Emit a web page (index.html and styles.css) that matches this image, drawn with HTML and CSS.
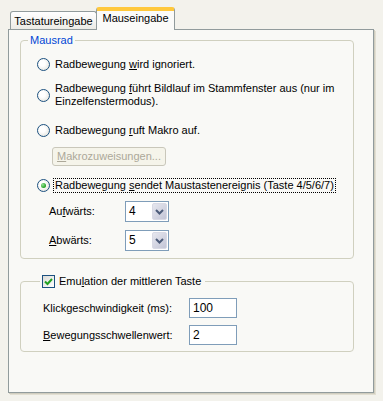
FILE: index.html
```html
<!DOCTYPE html>
<html lang="de">

<head>
    <meta charset="UTF-8">
    <title>Mauseingabe</title>
    <link rel="stylesheet" href="styles.css">
</head>

<body>
    <div class="dialog">
        <div class="tabs">
            <div class="tab">Tastatureingabe</div>
            <div class="tab active">Mauseingabe</div>
        </div>
        <div class="panel">
            <fieldset class="group group-wheel">
                <legend class="legend">Mausrad</legend>
                <div class="opt row1">
                    <span class="radio"></span>
                    <span>Radbewegung <u>w</u>ird ignoriert.</span>
                </div>
                <div class="opt row2">
                    <span class="radio"></span>
                    <span>Radbewegung <u>f</u>ührt Bildlauf im Stammfenster aus (nur im<br>Einzelfenstermodus).</span>
                </div>
                <div class="opt row3">
                    <span class="radio"></span>
                    <span>Radbewegung <u>r</u>uft Makro auf.</span>
                </div>
                <div class="btn-row">
                    <span class="btn disabled"><u>M</u>akrozuweisungen...</span>
                </div>
                <div class="opt row4">
                    <span class="radio checked"></span>
                    <span class="focus">Radbewegung <u>s</u>endet Maustastenereignis (Taste 4/5/6/7)</span>
                </div>
                <div class="field combo-row1">
                    <span class="lbl lbl-short">Au<u>f</u>wärts:</span>
                    <span class="combo"><span class="combo-val">4</span><span class="combo-btn"><svg width="9" height="6" viewBox="0 0 9 6"><path d="M1 1 L4.5 4.5 L8 1" fill="none" stroke="#4d5c7a" stroke-width="2"/></svg></span></span>
                </div>
                <div class="field combo-row2">
                    <span class="lbl lbl-short"><u>A</u>bwärts:</span>
                    <span class="combo"><span class="combo-val">5</span><span class="combo-btn"><svg width="9" height="6" viewBox="0 0 9 6"><path d="M1 1 L4.5 4.5 L8 1" fill="none" stroke="#4d5c7a" stroke-width="2"/></svg></span></span>
                </div>
            </fieldset>

            <fieldset class="group group-emu">
                <legend class="legend legend-check">
                    <span class="check"><svg width="9" height="8" viewBox="0 0 9 8"><path d="M1 3.5 L3.5 6 L8 1" fill="none" stroke="#21a121" stroke-width="2"/></svg></span>
                    <span class="legend-text">Emu<u>l</u>ation der mittleren Taste</span>
                </legend>
                <div class="field edit-row1">
                    <span class="lbl lbl-long">Klick<u>g</u>eschwindigkeit (ms):</span>
                    <span class="edit">100</span>
                </div>
                <div class="field edit-row2">
                    <span class="lbl lbl-long"><u>B</u>ewegungsschwellenwert:</span>
                    <span class="edit">2</span>
                </div>
            </fieldset>
        </div>
    </div>
</body>

</html>
```

FILE: styles.css
```css
/* Grundlayout */
body {
    margin: 0;
    background-color: #f3f2ec;
    font-family: 'Liberation Sans', Arial, sans-serif;
    font-size: 11px;
    line-height: 13px;
    color: #000;
}

.dialog {
    width: 383px;
    height: 401px;
    box-sizing: border-box;
    padding: 7px 0 0 8px;
}

u {
    text-decoration: underline;
    text-underline-offset: 1px;
}

/* Reiter */
.tabs {
    display: flex;
    align-items: flex-end;
    height: 22px;
    padding-left: 2px;
}

.tab {
    box-sizing: border-box;
    height: 18px;
    width: 87px;
    border: 1px solid #919b9c;
    border-bottom: none;
    border-radius: 3px 3px 0 0;
    background: linear-gradient(#ffffff, #ecebe6);
    padding-top: 3px;
    text-align: center;
}

.tab.active {
    position: relative;
    z-index: 1;
    width: 79px;
    height: 23px;
    margin-bottom: -1px;
    margin-left: -1px;
    border-top: 3px solid #ffc83c;
    box-shadow: inset 0 1px 0 #ffc83c;
    background: #fbfbf9;
    padding-top: 2px;
}

.tab.active::before {
    content: "";
}

/* Reiterseite */
.panel {
    box-sizing: border-box;
    width: 366px;
    height: 364px;
    border: 1px solid #919b9c;
    background-color: #f9f9f6;
    box-shadow: 1px 1px 0 #d0cdbf, 2px 2px 0 #e2dfd2;
    padding-top: 0;
    display: flow-root;
}

/* Gruppen */
.group {
    border: 1px solid #d0d0bf;
    border-radius: 4px;
    padding: 0;
    margin: 4px 19px 0 11px;
    min-width: 0;
}

.group-wheel {
    padding-bottom: 7px;
}

.group-emu {
    margin-top: 16px;
    padding-bottom: 6px;
}

.legend {
    margin-left: 7px;
    padding: 0 2px;
    color: #0046d5;
    line-height: 13px;
}

.legend-check {
    margin-left: 19px;
    color: #000;
    display: flex;
    align-items: center;
    gap: 4px;
    padding-right: 4px;
}

/* Optionsfelder */
.opt {
    display: flex;
    align-items: center;
    gap: 5px;
    margin-left: 16px;
}

.row1 { margin-top: 11px; }
.row2 { margin-top: 11px; }
.row3 { margin-top: 16px; }
.row4 { margin-top: 13px; }

.radio {
    flex: none;
    box-sizing: border-box;
    width: 13px;
    height: 13px;
    border: 1px solid #1c5180;
    border-radius: 50%;
    background: radial-gradient(circle at 40% 40%, #ffffff 30%, #dcdcd4 100%);
    display: flex;
    align-items: center;
    justify-content: center;
}

.radio.checked::after {
    content: "";
    width: 5px;
    height: 5px;
    border-radius: 50%;
    background: radial-gradient(circle at 35% 35%, #9ae39a, #21a121 70%);
}

.focus {
    outline: 1px dotted #000;
    outline-offset: 0;
    padding: 0 1px;
    margin-left: -1px;
}

/* Schaltfläche */
.btn-row {
    margin-top: 10px;
    margin-left: 31px;
}

.btn {
    display: inline-block;
    box-sizing: border-box;
    width: 114px;
    height: 19px;
    border: 1px solid #c9c7ba;
    border-radius: 3px;
    background: #f5f4ea;
    line-height: 17px;
    text-align: center;
}

.btn.disabled {
    color: #aca899;
}

/* Felder */
.field {
    display: flex;
    align-items: center;
}

.combo-row1 { margin-top: 9px; margin-left: 28px; }
.combo-row2 { margin-top: 8px; margin-left: 28px; }
.edit-row1 { margin-top: 10px; margin-left: 22px; }
.edit-row2 { margin-top: 7px; margin-left: 22px; }

.lbl-short { width: 76px; }
.lbl-long { width: 146px; }

.combo {
    box-sizing: border-box;
    width: 44px;
    height: 21px;
    border: 1px solid #7f9db9;
    background: #fff;
    display: flex;
    align-items: stretch;
    padding: 1px;
}

.combo-val {
    flex: 1;
    padding-left: 2px;
    line-height: 17px;
    font-size: 12px;
}

.combo-btn {
    width: 15px;
    border-radius: 2px;
    background: linear-gradient(135deg, #e6e7ef, #c3c5d6);
    border: 1px solid #d8d9e4;
    box-sizing: border-box;
    display: flex;
    align-items: center;
    justify-content: center;
}

.edit {
    box-sizing: border-box;
    width: 48px;
    height: 20px;
    border: 1px solid #7f9db9;
    background: #fff;
    padding-left: 3px;
    line-height: 18px;
    font-size: 12px;
}

/* Kontrollkästchen */
.check {
    flex: none;
    box-sizing: border-box;
    width: 13px;
    height: 13px;
    border: 1px solid #1c5180;
    background: linear-gradient(135deg, #dcdcd7, #ffffff);
    display: flex;
    align-items: center;
    justify-content: center;
}
```
